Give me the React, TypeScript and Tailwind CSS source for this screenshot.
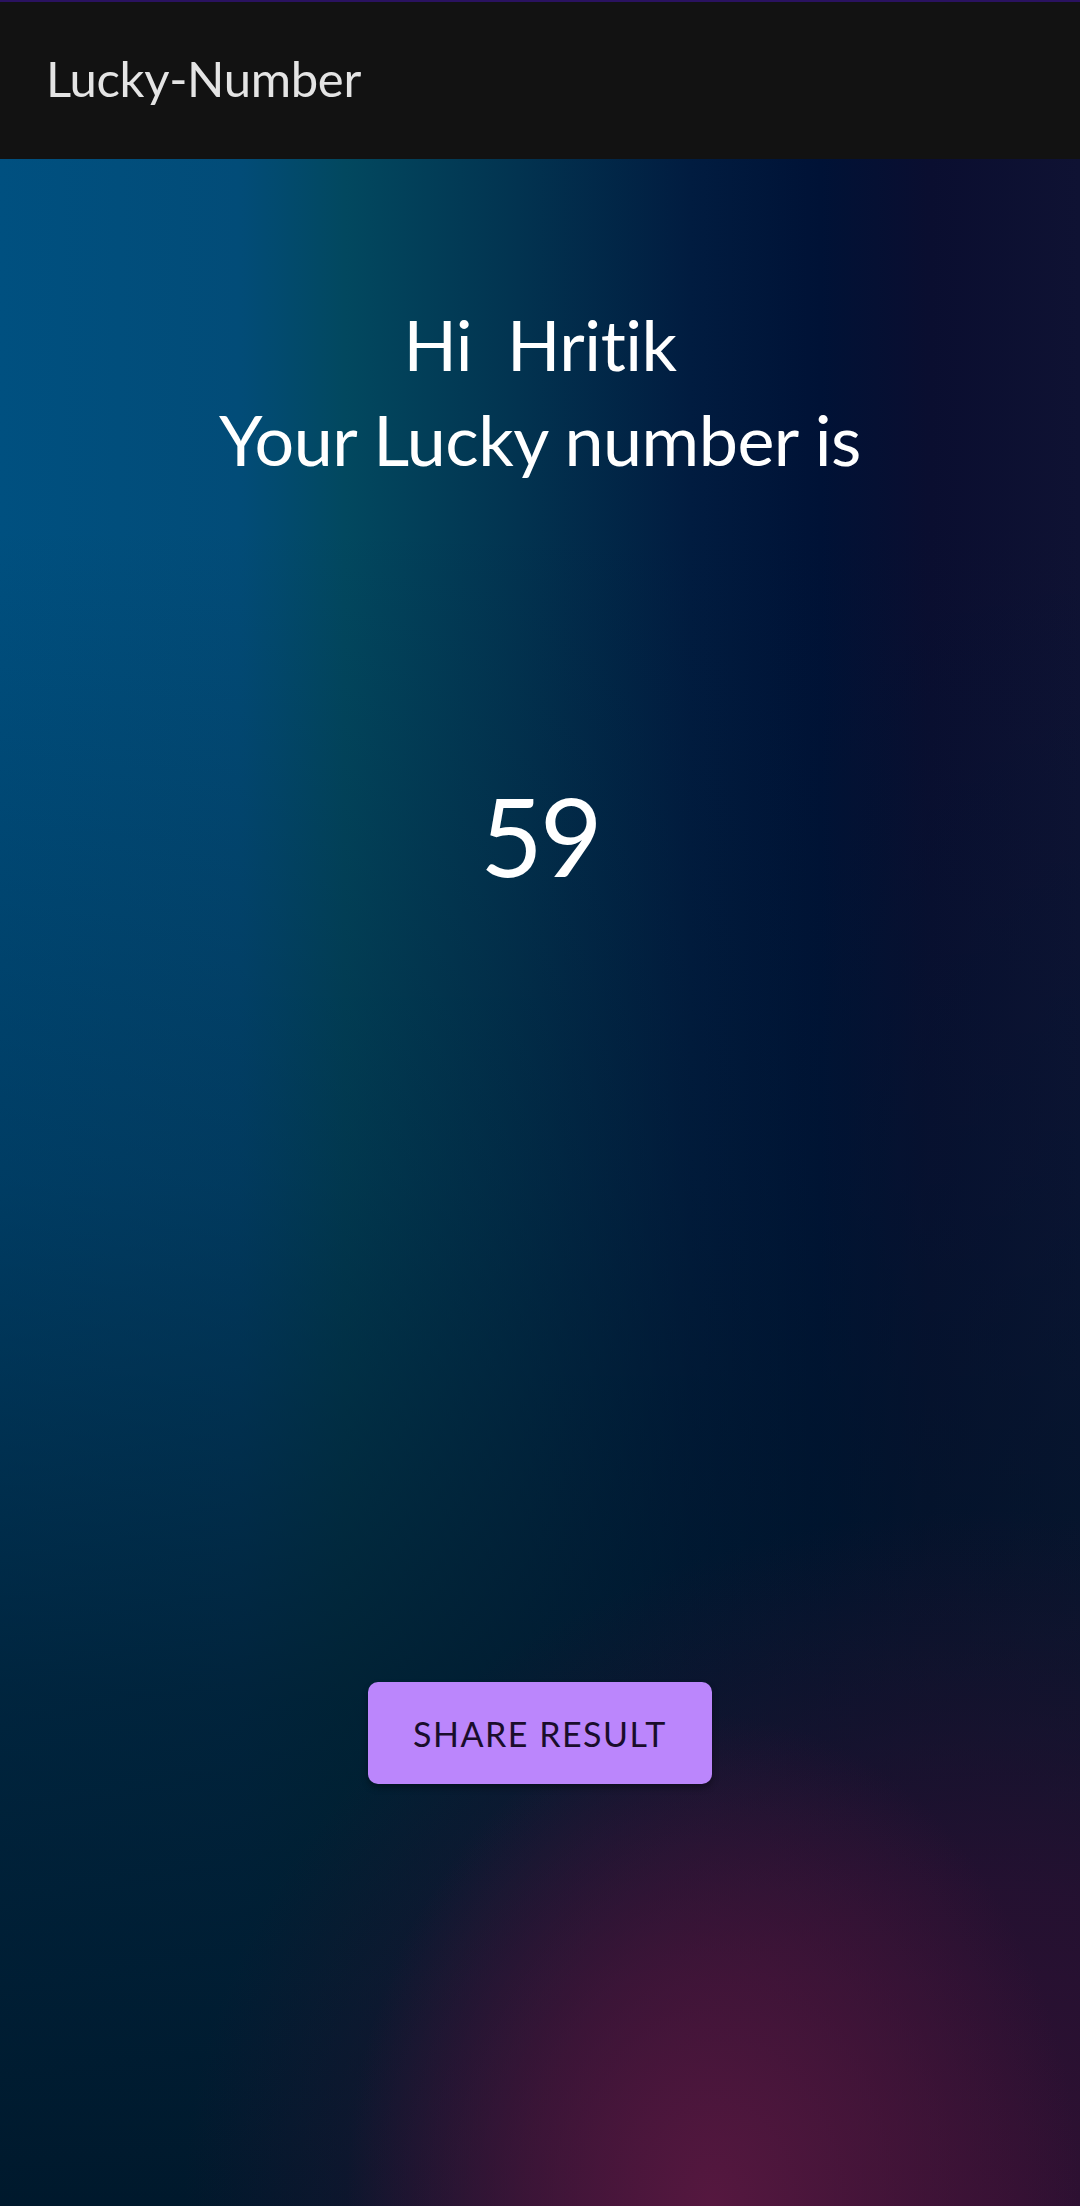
import React from "react";

export default function App() {
  return (
    <div className="min-h-screen w-full flex flex-col font-[Lato,sans-serif] bg-[#001628]">
      <header className="h-[159px] shrink-0 border-t-2 border-[#2a1260] bg-[#121212] flex items-center px-[46px] pb-[4px]">
        <h1 className="text-[49px] leading-[1.2] text-[#e4e4e4] font-normal tracking-[-0.3px]">Lucky-Number</h1>
      </header>
      <main className="flex-1 flex flex-col items-center bg-[radial-gradient(ellipse_34%_24%_at_66%_100%,rgba(88,24,64,0.95)_0%,rgba(80,22,60,0.6)_50%,rgba(80,22,60,0)_100%),radial-gradient(ellipse_75%_34%_at_92%_100%,rgba(48,16,50,1)_0%,rgba(42,16,50,0.85)_45%,rgba(30,16,50,0)_100%),linear-gradient(to_bottom,rgba(0,22,40,0)_18%,rgba(0,24,46,0.35)_50%,rgba(0,22,40,0.75)_75%,rgba(0,22,40,0.95)_100%),linear-gradient(to_right,#005080_0%,#024c78_22%,#02485f_32%,#023350_48%,#011c40_64%,#001236_76%,#0a0e30_86%,#0f1233_100%)]">
        <div className="mt-[138px] text-center text-white text-[70px] leading-[95px] tracking-[-0.5px]">
          <p>Hi&nbsp; Hritik</p>
          <p>Your Lucky number is</p>
        </div>
        <div className="mt-[294px] text-white text-[108px] leading-none tracking-[-3px]">59</div>
        <button className="mt-[793px] w-[344px] h-[102px] rounded-[10px] bg-[#bb86fc] text-[#1a0d2b] text-[34px] tracking-[1.5px] shadow-[0_4px_6px_rgba(0,0,0,0.35)] flex items-center justify-center">
          SHARE RESULT
        </button>
      </main>
    </div>
  );
}
